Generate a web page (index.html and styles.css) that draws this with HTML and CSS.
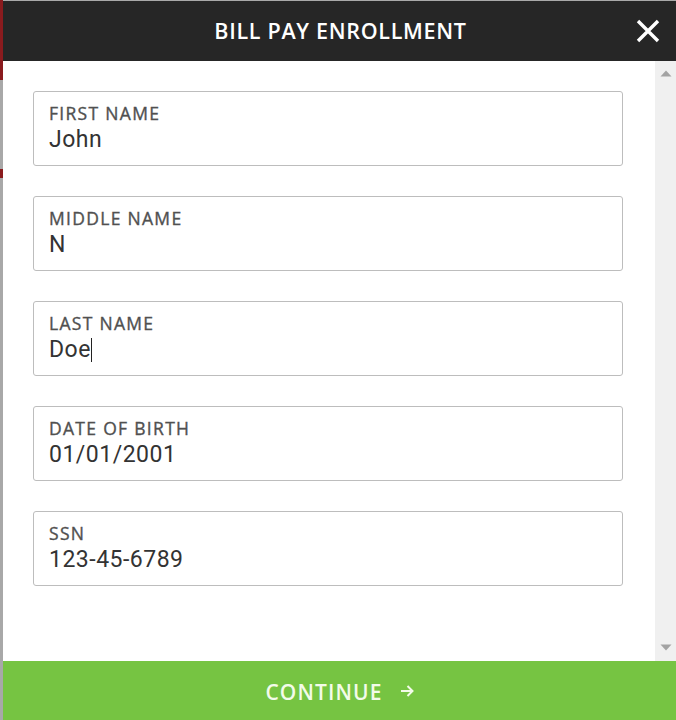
FILE: index.html
```html
<!DOCTYPE html>
<html lang="en">
<head>
<meta charset="utf-8">
<title>Bill Pay Enrollment</title>
<link rel="stylesheet" href="styles.css">
</head>
<body>
<div class="screen">
  <div class="edge">
    <div class="edge-red edge-red-top"></div>
    <div class="edge-grey edge-grey-a"></div>
    <div class="edge-red edge-red-mid"></div>
    <div class="edge-grey edge-grey-b"></div>
  </div>
  <div class="dialog">
    <header class="dialog-header">
      <span class="spacer"></span>
      <h1 class="dialog-title">BILL PAY ENROLLMENT</h1>
      <button class="close" type="button" aria-label="Close">
        <svg width="24" height="24" viewBox="0 0 24 24"><path d="M2 2 L22 22 M22 2 L2 22" stroke="#fff" stroke-width="3.4" stroke-linecap="butt" fill="none"/></svg>
      </button>
    </header>
    <div class="dialog-body">
      <form class="form">
        <label class="field">
          <span class="field-label">FIRST NAME</span>
          <span class="field-value">John</span>
        </label>
        <label class="field">
          <span class="field-label">MIDDLE NAME</span>
          <span class="field-value">N</span>
        </label>
        <label class="field">
          <span class="field-label">LAST NAME</span>
          <span class="field-value">Doe<span class="caret"></span></span>
        </label>
        <label class="field">
          <span class="field-label">DATE OF BIRTH</span>
          <span class="field-value">01/01/2001</span>
        </label>
        <label class="field">
          <span class="field-label">SSN</span>
          <span class="field-value">123-45-6789</span>
        </label>
      </form>
      <div class="scrollbar">
        <svg class="scroll-arrow" width="12" height="7" viewBox="0 0 12 7"><path d="M6 0.5 L11.5 6.5 L0.5 6.5 Z" fill="#a3a3a3"/></svg>
        <svg class="scroll-arrow" width="12" height="7" viewBox="0 0 12 7"><path d="M0.5 0.5 L11.5 0.5 L6 6.5 Z" fill="#a3a3a3"/></svg>
      </div>
    </div>
    <button class="continue" type="button">
      <span class="continue-text">CONTINUE</span>
      <svg class="continue-arrow" width="14" height="12" viewBox="0 0 14 12"><path d="M1 6 H12.5 M7.5 1 L12.5 6 L7.5 11" stroke="#f3fbe9" stroke-width="2" fill="none"/></svg>
    </button>
  </div>
</div>
</body>
</html>
```

FILE: styles.css
```css
* { box-sizing: border-box; }
html, body { margin: 0; padding: 0; }
body {
  width: 676px;
  height: 720px;
  overflow: hidden;
  background: #ffffff;
  font-family: "Open Sans", "Liberation Sans", sans-serif;
}
.screen {
  display: flex;
  width: 676px;
  height: 720px;
}
.edge {
  width: 3px;
  display: flex;
  flex-direction: column;
  flex: none;
}
.edge-red { background: #8a1b1e; }
.edge-grey { background: #a8a8a8; }
.edge-red-top { height: 80px; }
.edge-grey-a { height: 89px; }
.edge-red-mid { height: 9px; }
.edge-grey-b { flex: 1; }

.dialog {
  flex: 1;
  display: flex;
  flex-direction: column;
  min-width: 0;
}
.dialog-header {
  height: 61px;
  flex: none;
  background: #262626;
  border-top: 1px solid #a9a9a9;
  display: grid;
  grid-template-columns: 1fr auto 1fr;
  align-items: center;
}
.dialog-title {
  margin: 0;
  color: #ffffff;
  font-family: "Open Sans", "Liberation Sans", sans-serif;
  font-weight: 600;
  font-size: 21.5px;
  letter-spacing: 0.7px;
  line-height: 24px;
  padding-left: 2px;
}
.close {
  justify-self: end;
  margin-right: 16px;
  width: 24px;
  height: 24px;
  padding: 0;
  border: 0;
  background: transparent;
  display: flex;
}
.dialog-body {
  flex: 1;
  display: flex;
  min-height: 0;
}
.form {
  flex: 1;
  margin: 0;
  padding: 30px 32px 0 30px;
  display: flex;
  flex-direction: column;
  gap: 30px;
}
.field {
  height: 75px;
  border: 1px solid #bdbdbd;
  border-radius: 3px;
  padding: 11px 15px 0 15px;
  display: flex;
  flex-direction: column;
}
.field-label {
  font-family: "Open Sans", "Liberation Sans", sans-serif;
  font-weight: 400;
  font-size: 17.5px;
  line-height: 20px;
  letter-spacing: 1.3px;
  color: #505050;
  -webkit-text-stroke: 0.35px #505050;
}
.field-value {
  margin-top: 4px;
  font-family: Roboto, "Liberation Sans", sans-serif;
  font-size: 23px;
  line-height: 26px;
  letter-spacing: 0.5px;
  color: #333333;
  display: flex;
  align-items: center;
}
.caret {
  display: inline-block;
  width: 1px;
  height: 24px;
  background: #222222;
  margin-left: 0;
}
.scrollbar {
  width: 21px;
  flex: none;
  background: #f0f0f0;
  display: flex;
  flex-direction: column;
  justify-content: space-between;
  align-items: center;
  padding: 9px 0 10px 1px;
}
.continue {
  height: 59px;
  flex: none;
  border: 0;
  margin: 0;
  background: #76c442;
  color: #f3fbe9;
  display: flex;
  align-items: center;
  justify-content: center;
  gap: 17px;
  font-family: "Open Sans", "Liberation Sans", sans-serif;
  font-weight: 600;
  font-size: 21px;
  letter-spacing: 1.1px;
  padding: 2px 0 0 0;
}
.continue-text { line-height: 24px; }
.continue-arrow { margin-top: -2px; }
```
